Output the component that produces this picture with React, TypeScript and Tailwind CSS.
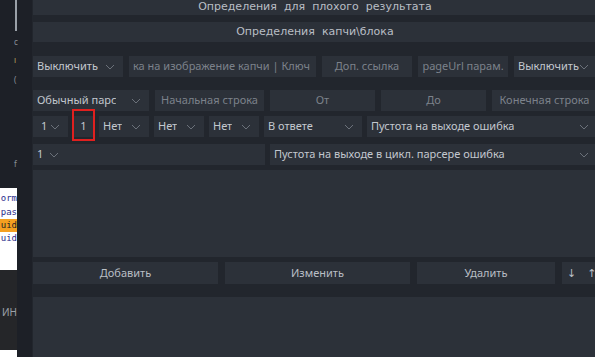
import React from 'react';

const font = { fontFamily: '"Noto Sans", "DejaVu Sans", sans-serif' };
const wideFont = { fontFamily: '"DejaVu Sans", "Noto Sans", sans-serif' };

function Chevron() {
  return (
    <svg width="10" height="6" viewBox="0 0 10 6" className="shrink-0">
      <path d="M1 1 L5 5 L9 1" fill="none" stroke="#6b717a" strokeWidth="1" />
    </svg>
  );
}

function Select({ label, className = '' }: { label: string; className?: string }) {
  return (
    <div className={`flex h-[21px] items-center justify-between bg-[#2c3139] pl-[4px] pr-[8px] text-[#c3c8cf] ${className}`}>
      <span className="truncate">{label}</span>
      <Chevron />
    </div>
  );
}

function Field({ label, className = '' }: { label: string; className?: string }) {
  return (
    <div className={`flex h-[21px] items-center overflow-hidden whitespace-nowrap bg-[#2c3139] px-[4px] text-[#7c828b] ${className}`}>
      {label}
    </div>
  );
}

function Button({ label, className = '' }: { label: string; className?: string }) {
  return (
    <div className={`flex items-center justify-center bg-[#2c3139] text-[#b9bec5] ${className}`}>
      {label}
    </div>
  );
}

export default function App() {
  return (
    <div className="flex h-[357px] w-[595px] overflow-hidden bg-[#22262d] text-[11px]" style={font}>
      {/* left strip: neighbour window */}
      <div className="relative w-[32px] shrink-0 bg-[#1d2027]">
        <div className="absolute left-[15px] top-0 h-[31px] w-[2px] bg-[#9aa0a8]" />
        <div className="absolute left-[14px] top-[36px] text-[8px] text-[#8a9099]">c</div>
        <div className="absolute left-[14px] top-[54px] text-[8px] text-[#b4a860]">ı</div>
        <div className="absolute left-[14px] top-[74px] text-[8px] text-[#8a9099]">(</div>
        <div className="absolute left-[14px] top-[158px] text-[8px] text-[#8a9099]">f</div>
        <div className="absolute left-0 top-[188px] flex h-[82px] w-[17px] flex-col bg-white pt-[5px] text-[9px] leading-[11px] text-[#2a2a8a]" style={{ fontFamily: '"DejaVu Sans Mono", monospace' }}>
          <div className="h-[11px] text-right">orm</div>
          <div className="mt-[3px] h-[11px] text-right">pas</div>
          <div className="mt-[1px] bg-[#f5a020] py-[1px] text-right text-[#222]">uid</div>
          <div className="mt-[1px] h-[11px] text-right">uid</div>
        </div>
        <div className="absolute left-0 top-[270px] h-[80px] w-[17px] bg-[#252629]">
          <div className="mt-[35px] text-right text-[10px] text-[#9aa0a8]">ИН</div>
        </div>
        <div className="absolute bottom-0 left-0 h-[7px] w-[17px] bg-white" />
      </div>

      <div className="flex flex-1 flex-col pl-px">
        <div style={wideFont}>
          <Button label="Определения  для  плохого  результата" className="h-[15px] whitespace-pre pb-[2px] leading-[12px]" />
        </div>
        <div style={wideFont} className="mt-[7px]">
          <Button label="Определения  капчи\блока" className="h-[20px] whitespace-pre" />
        </div>

        <div className="mt-[14px] flex gap-[6px]">
          <Select label="Выключить" className="w-[90px]" />
          <Field label="ка на изображение капчи | Ключ" className="w-[187px]" />
          <Field label="Доп. ссылка" className="w-[90px] justify-center" />
          <Field label="pageUrl парам." className="w-[90px] justify-center" />
          <Select label="Выключить" className="flex-1" />
        </div>

        <div className="mt-[13px] flex gap-[6px]">
          <Select label="Обычный парс" className="w-[116px]" />
          <Field label="Начальная строка" className="w-[109px] justify-center" />
          <Field label="От" className="w-[105px] justify-center" />
          <Field label="До" className="w-[105px] justify-center" />
          <Field label="Конечная строка" className="flex-1 justify-center" />
        </div>

        <div className="mt-[5px] flex gap-[5px]">
          <Select label="1" className="w-[35px] pl-[8px] pr-[6px]" />
          <div className="relative">
            <div className="flex h-[21px] w-[21px] items-center justify-center bg-[#2c3139] text-[#c3c8cf]">1</div>
            <div className="absolute -left-[1px] -right-[1px] bottom-[-4px] top-[-7px] border-2 border-[#e0201f]" />
          </div>
          <Select label="Нет" className="w-[50px]" />
          <Select label="Нет" className="w-[50px]" />
          <Select label="Нет" className="w-[50px]" />
          <Select label="В ответе" className="w-[98px]" />
          <Select label="Пустота на выходе ошибка" className="flex-1" />
        </div>

        <div className="mt-[7px] flex gap-[5px]">
          <div className="flex h-[21px] w-[232px] items-center bg-[#2c3139] pl-[4px] text-[#c3c8cf]">
            <span className="mr-[6px]">1</span>
            <Chevron />
          </div>
          <Select label="Пустота на выходе в цикл. парсере ошибка" className="flex-1" />
        </div>

        <div className="mt-[5px] h-[87px] bg-[#2c3139]" />

        <div className="mt-[5px] flex gap-[7px]">
          <Button label="Добавить" className="h-[22px] w-[185px]" />
          <Button label="Изменить" className="h-[22px] w-[185px]" />
          <Button label="Удалить" className="h-[22px] w-[138px]" />
          <div className="flex h-[22px] flex-1 items-center gap-[11px] bg-[#2c3139] pl-[5px] text-[#b9bec5]">
            <span>↓</span>
            <span>↑</span>
          </div>
        </div>

        <div className="mt-[13px] flex-1 bg-[#2c3139]" />
      </div>
    </div>
  );
}
